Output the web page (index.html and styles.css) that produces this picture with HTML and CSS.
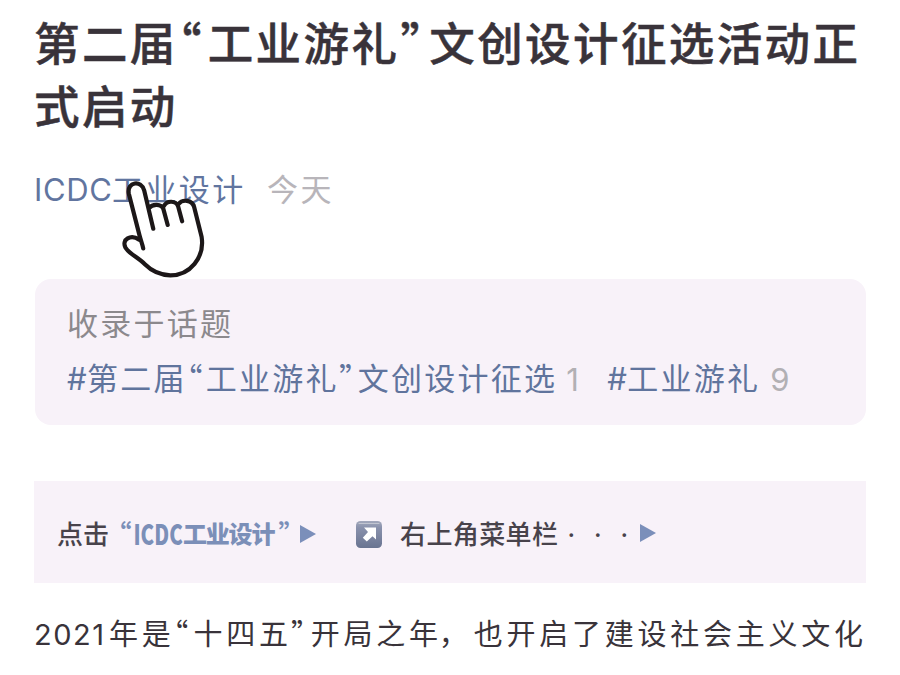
FILE: index.html
```html
<!DOCTYPE html>
<html lang="zh-CN">
<head>
<meta charset="utf-8">
<title>第二届“工业游礼”文创设计征选活动正式启动</title>
<link rel="stylesheet" href="styles.css">
</head>
<body>
<article class="article">
  <h1 class="title">第二届<span class="quote">“</span>工业游礼<span class="quote">”</span>文创设计征选活动正<br>式启动</h1>
  <div class="meta">
    <a class="author"><span class="author-latin">ICDC</span>工业设计</a>
    <span class="date">今天</span>
    <svg class="hand" viewBox="300 58 256 298" fill="none" stroke="#1c1718" stroke-width="12.5" stroke-linecap="round" stroke-linejoin="round">
      <path fill="#fff" stroke="none" d="M358 238L326 100C320 66 364 60 372 92L384 142C400 132 424 132 431 145C438 122 468 122 474 138C484 118 515 118 521 142L543 230C553 292 508 345 450 345C414 344 392 330 374 312C354 292 326 280 316 262C304 238 330 222 358 238Z"/>
      <path d="M369 265C366 249 362 242 358 226L326 101C320 66 364 60 372 92L399 206M386 145C397 131 423 132 429 147L442 195M431 138C440 121 466 122 473 139L485 184M475 132C484 119 515 118 521 142L543 230C553 292 508 345 450 345C414 344 392 330 374 312C354 292 326 280 316 262C304 238 332 222 357 239"/>
    </svg>
  </div>
  <section class="topics">
    <div class="topics-label">收录于话题</div>
    <div class="topics-list"><a class="topic"><span class="hash">#</span>第二届<span class="quote">“</span>工业游礼<span class="quote">”</span>文创设计征选</a><span class="count">1</span><a class="topic"><span class="hash">#</span>工业游礼</a><span class="count">9</span></div>
  </section>
  <section class="banner">
    <span class="hint">点击</span>
    <span class="account"><span class="account-quote">“</span><span class="account-latin">ICDC</span><span class="account-name">工业设计</span><span class="account-quote close">”</span></span>
    <svg class="triangle" viewBox="0 0 16 18"><path d="M0 0L16 9L0 18Z" fill="#7b8fba"/></svg>
    <svg class="arrow" viewBox="0 0 26 27">
      <defs><linearGradient id="tile" x2="0" y2="1"><stop stop-color="#a3a9bc"/><stop offset=".25" stop-color="#8991ac"/><stop offset="1" stop-color="#697491"/></linearGradient></defs>
      <rect width="26" height="27" rx="4.5" fill="url(#tile)"/>
      <path d="M3 2.5H23" stroke="#c1c5d1" stroke-linecap="round"/>
      <path d="M8 6.5H20V18.5L16.5 15.2L10.8 20.5L6.8 16.8L12 11Z" fill="#fff"/>
    </svg>
    <span class="menu-hint">右上角菜单栏</span>
    <span class="dots"><i>·</i><i>·</i><i>·</i></span>
    <svg class="triangle last" viewBox="0 0 16 18"><path d="M0 0L16 9L0 18Z" fill="#7b8fba"/></svg>
  </section>
  <p class="body-text"><span class="year">2021</span>年是<span class="quote">“</span>十四五<span class="quote">”</span>开局之年<span class="comma">，</span>也开启了建设社会主义文化</p>
</article>
</body>
</html>
```
FILE: styles.css
```css
* { box-sizing: border-box; }
body {
  margin: 0;
  background: #fff;
  color: #39333a;
  font-family: "Noto Sans CJK SC", sans-serif;
  overflow: hidden;
}
.article { padding: 10px 0 0 34px; white-space: nowrap; }
.title {
  margin: 0;
  font-size: 45.5px;
  font-weight: 500;
  line-height: 63px;
  letter-spacing: 2.4px;
  -webkit-text-stroke: .5px #39333a;
}
.quote {
  display: inline-flex;
  justify-content: center;
  width: 30px;
  padding-right: 5px;
  font-feature-settings: "halt";
  letter-spacing: 0;
}
.meta {
  position: relative;
  display: flex;
  height: 44px;
  margin-top: 30px;
  font-size: 31px;
  line-height: 44px;
  letter-spacing: 2.4px;
}
.author { display: flex; width: 233px; color: #61759f; }
.author-latin {
  width: 78px;
  padding-top: 2px;
  font-family: Inter, sans-serif;
  font-size: 31px;
  letter-spacing: .6px;
}
.date { color: #b8b5ba; }
.hand {
  position: absolute;
  left: 86px;
  top: 13px;
  width: 86px;
  height: 100px;
}
.topics {
  width: 831px;
  height: 146px;
  margin: 69px 0 0 1px;
  padding: 15px 0 0 32px;
  border-radius: 16px;
  background: #f8f2f9;
  font-size: 31px;
  line-height: 55px;
  letter-spacing: 2.25px;
}
.topics-label { color: #8c898d; }
.topics-list { display: flex; }
.topic { color: #60749d; }
.topic .quote { width: 19px; padding-right: 3px; }
.hash {
  display: inline-block;
  width: 20px;
  font-family: Inter, sans-serif;
  letter-spacing: 0;
}
.count {
  width: 50px;
  padding: 3px 0 0 9px;
  color: #b2b0b4;
  font-family: Inter, sans-serif;
  letter-spacing: 0;
}
.count:last-child { padding-left: 10px; }
.banner {
  display: flex;
  align-items: center;
  width: 832px;
  height: 102px;
  margin-top: 56px;
  padding: 4px 0 0 23px;
  background: #f8f2f9;
  color: #48434b;
  font-size: 26px;
  font-weight: 500;
  line-height: 38px;
}
.hint, .account, .menu-hint { margin-top: -3px; }
.hint { width: 61px; }
.account { display: flex; width: 182px; color: #7b8fb8; font-weight: 700; }
.account-quote { display: flex; justify-content: center; width: 14px; font-feature-settings: "halt"; }
.account-latin {
  width: 51px;
  padding-left: 2px;
  font-size: 28px;
  font-weight: 900;
  transform: scaleX(.73);
  transform-origin: left;
}
.account-name { width: 95px; font-size: 24px; letter-spacing: -1.2px; font-weight: 900; }
.triangle { width: 16px; height: 18px; }
.arrow { width: 26px; height: 27px; margin-left: 40px; }
.menu-hint { width: 158px; margin-left: 18px; letter-spacing: .4px; }
.dots { display: flex; width: 82px; }
.dots i { width: 26.5px; text-align: center; font-style: normal; font-family: "Noto Sans", sans-serif; }
.triangle.last { margin-top: -2px; }
.body-text {
  margin: 28px 0 0;
  font-size: 29px;
  line-height: 42px;
  letter-spacing: 3.75px;
}
.year {
  display: inline-block;
  width: 75px;
  font-family: Inter, sans-serif;
  letter-spacing: 1.5px;
}
.body-text .quote { width: 19px; padding-right: 6px; }
.comma { display: inline-block; width: 32px; text-indent: -3px; }
```
